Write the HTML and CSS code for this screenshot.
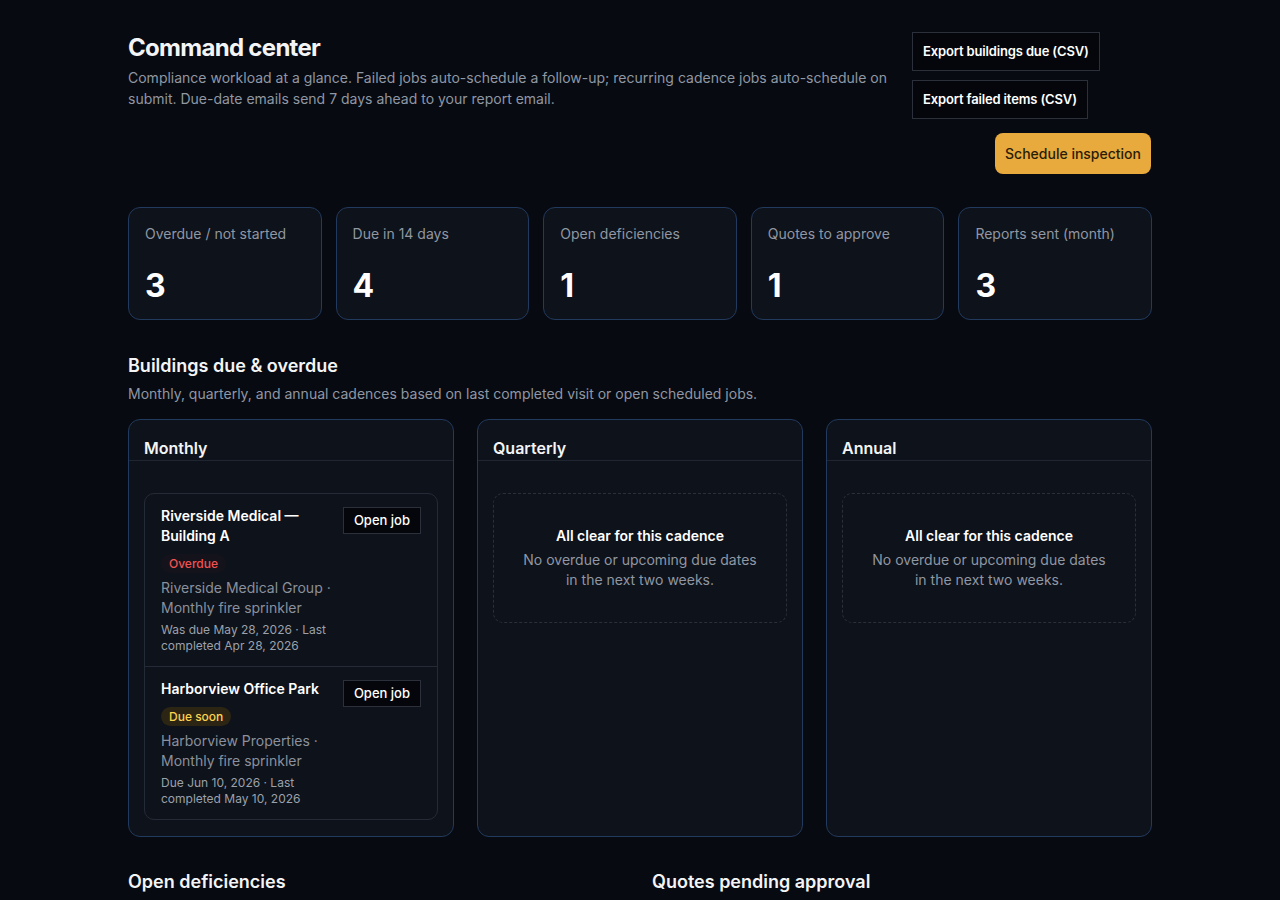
FILE: index.html
```html
<!DOCTYPE html>
<html lang="en">
<head>
  <meta charset="UTF-8">
  <meta name="viewport" content="width=device-width, initial-scale=1">
  <title>Command center</title>
  <link rel="stylesheet" href="styles.css">
</head>
<body>
  <main class="page">
    <header class="page-header">
      <div class="intro">
        <h1>Command center</h1>
        <p>Compliance workload at a glance. Failed jobs auto-schedule a follow-up; recurring cadence jobs auto-schedule on submit. Due-date emails send 7 days ahead to your report email.</p>
      </div>
      <div class="actions">
        <button class="btn-outline">Export buildings due (CSV)</button>
        <button class="btn-outline">Export failed items (CSV)</button>
        <button class="btn-primary">Schedule inspection</button>
      </div>
    </header>

    <section class="stats">
      <div class="stat">
        <div class="stat-label">Overdue / not started</div>
        <div class="stat-value">3</div>
      </div>
      <div class="stat">
        <div class="stat-label">Due in 14 days</div>
        <div class="stat-value">4</div>
      </div>
      <div class="stat">
        <div class="stat-label">Open deficiencies</div>
        <div class="stat-value">1</div>
      </div>
      <div class="stat">
        <div class="stat-label">Quotes to approve</div>
        <div class="stat-value">1</div>
      </div>
      <div class="stat">
        <div class="stat-label">Reports sent (month)</div>
        <div class="stat-value">3</div>
      </div>
    </section>

    <section class="section">
      <h2>Buildings due &amp; overdue</h2>
      <p class="section-sub">Monthly, quarterly, and annual cadences based on last completed visit or open scheduled jobs.</p>

      <div class="cadences">
        <div class="panel">
          <div class="panel-head">Monthly</div>
          <div class="panel-body">
            <ul class="due-list">
              <li class="due-item">
                <div class="due-info">
                  <div class="due-title">Riverside Medical — Building A</div>
                  <span class="badge badge-overdue">Overdue</span>
                  <div class="due-meta">Riverside Medical Group · Monthly fire sprinkler</div>
                  <div class="due-dates">Was due May 28, 2026 · Last completed Apr 28, 2026</div>
                </div>
                <button class="btn-small">Open job</button>
              </li>
              <li class="due-item">
                <div class="due-info">
                  <div class="due-title">Harborview Office Park</div>
                  <span class="badge badge-soon">Due soon</span>
                  <div class="due-meta">Harborview Properties · Monthly fire sprinkler</div>
                  <div class="due-dates">Due Jun 10, 2026 · Last completed May 10, 2026</div>
                </div>
                <button class="btn-small">Open job</button>
              </li>
            </ul>
          </div>
        </div>

        <div class="panel">
          <div class="panel-head">Quarterly</div>
          <div class="panel-body">
            <div class="empty">
              <div class="empty-title">All clear for this cadence</div>
              <div class="empty-text">No overdue or upcoming due dates in the next two weeks.</div>
            </div>
          </div>
        </div>

        <div class="panel">
          <div class="panel-head">Annual</div>
          <div class="panel-body">
            <div class="empty">
              <div class="empty-title">All clear for this cadence</div>
              <div class="empty-text">No overdue or upcoming due dates in the next two weeks.</div>
            </div>
          </div>
        </div>
      </div>
    </section>

    <section class="split">
      <div>
        <h2>Open deficiencies</h2>
      </div>
      <div>
        <h2>Quotes pending approval</h2>
      </div>
    </section>
  </main>
</body>
</html>
```

FILE: styles.css
```css
:root {
  --bg: #070a11;
  --card-bg: #0e121a;
  --text: #f3f4f6;
  --muted: #9097a3;
  --card-border: #223a5e;
  --line: #1f2632;
  --btn-bg: #04060b;
  --btn-border: #2b303b;
  --accent: #e8a93d;
}

* {
  box-sizing: border-box;
}

body {
  margin: 0;
  background: var(--bg);
  color: var(--text);
  font-family: 'Inter', 'Liberation Sans', sans-serif;
  font-size: 14px;
  line-height: 20px;
}

.page {
  width: 1024px;
  margin: 0 auto;
  padding: 32px 0 40px;
}

button {
  font-family: inherit;
  cursor: pointer;
}

/* header */

.page-header {
  display: flex;
  justify-content: space-between;
  gap: 24px;
}

.intro {
  width: 760px;
}

h1 {
  margin: 0;
  font-size: 24px;
  line-height: 32px;
  font-weight: 700;
  letter-spacing: -0.7px;
}

.intro p {
  margin: 3px 0 0;
  color: var(--muted);
  line-height: 21px;
}

.actions {
  width: 240px;
  display: flex;
  flex-direction: column;
  align-items: flex-start;
}

.btn-outline {
  background: var(--btn-bg);
  color: #fff;
  border: 1px solid var(--btn-border);
  font-size: 13px;
  font-weight: 600;
  line-height: 17px;
  letter-spacing: -0.15px;
  padding: 10px 10px;
  margin-bottom: 9px;
}

.btn-outline + .btn-outline {
  margin-bottom: 14px;
}

.btn-primary {
  align-self: flex-end;
  background: var(--accent);
  color: #2a1d06;
  border: none;
  border-radius: 8px;
  font-size: 14px;
  font-weight: 500;
  line-height: 21px;
  padding: 10px 10px;
  margin-right: 1px;
}

/* stats */

.stats {
  display: grid;
  grid-template-columns: repeat(5, 1fr);
  gap: 14px;
  margin-top: 33px;
}

.stat {
  background: var(--card-bg);
  border: 1px solid var(--card-border);
  border-radius: 12px;
  padding: 16px 16px 13px;
}

.stat-label {
  color: var(--muted);
}

.stat-value {
  margin-top: 22px;
  font-size: 32px;
  line-height: 40px;
  font-weight: 700;
  color: #fff;
}

/* sections */

h2 {
  margin: 0;
  font-size: 18px;
  line-height: 28px;
  font-weight: 600;
}

.section {
  margin-top: 32px;
}

.section-sub {
  margin: 4px 0 0;
  color: var(--muted);
}

.cadences {
  display: grid;
  grid-template-columns: repeat(3, 1fr);
  gap: 23px;
  margin-top: 15px;
}

.panel {
  background: var(--card-bg);
  border: 1px solid var(--card-border);
  border-radius: 12px;
}

.panel-head {
  padding: 16px 15px 0;
  font-size: 16px;
  font-weight: 600;
  line-height: 24px;
  border-bottom: 1px solid var(--line);
}

.panel-body {
  padding: 32px 15px 16px;
}

.due-list {
  list-style: none;
  margin: 0;
  padding: 0;
  border: 1px solid #252b36;
  border-radius: 10px;
}

.due-item {
  display: flex;
  align-items: flex-start;
  gap: 8px;
  padding: 12px 16px;
}

.due-item + .due-item {
  border-top: 1px solid #252b36;
}

.due-info {
  flex: 1;
}

.due-title {
  font-weight: 600;
  color: #fff;
}

.badge {
  display: inline-block;
  margin-top: 8px;
  padding: 0 8px;
  border-radius: 999px;
  font-size: 12px;
  font-weight: 500;
  line-height: 19px;
}

.badge-overdue {
  color: #f05252;
  background: rgba(239, 68, 68, 0.03);
}

.badge-soon {
  color: #fcd34d;
  background: #2c2514;
}

.due-meta {
  margin-top: 5px;
  color: #8a909c;
}

.due-dates {
  margin-top: 4px;
  font-size: 12px;
  line-height: 16px;
  color: #9ba1ab;
}

.btn-small {
  background: var(--btn-bg);
  color: #fff;
  border: 1px solid var(--btn-border);
  font-size: 13px;
  font-weight: 500;
  line-height: 17px;
  padding: 4px 10px;
  margin-top: 1px;
}

.empty {
  border: 1px dashed #2a303b;
  border-radius: 10px;
  padding: 32px 24px;
  text-align: center;
}

.empty-title {
  font-weight: 600;
  color: #fff;
}

.empty-text {
  margin-top: 4px;
  color: var(--muted);
}

.split {
  display: grid;
  grid-template-columns: 1fr 1fr;
  gap: 24px;
  margin-top: 31px;
}
```
